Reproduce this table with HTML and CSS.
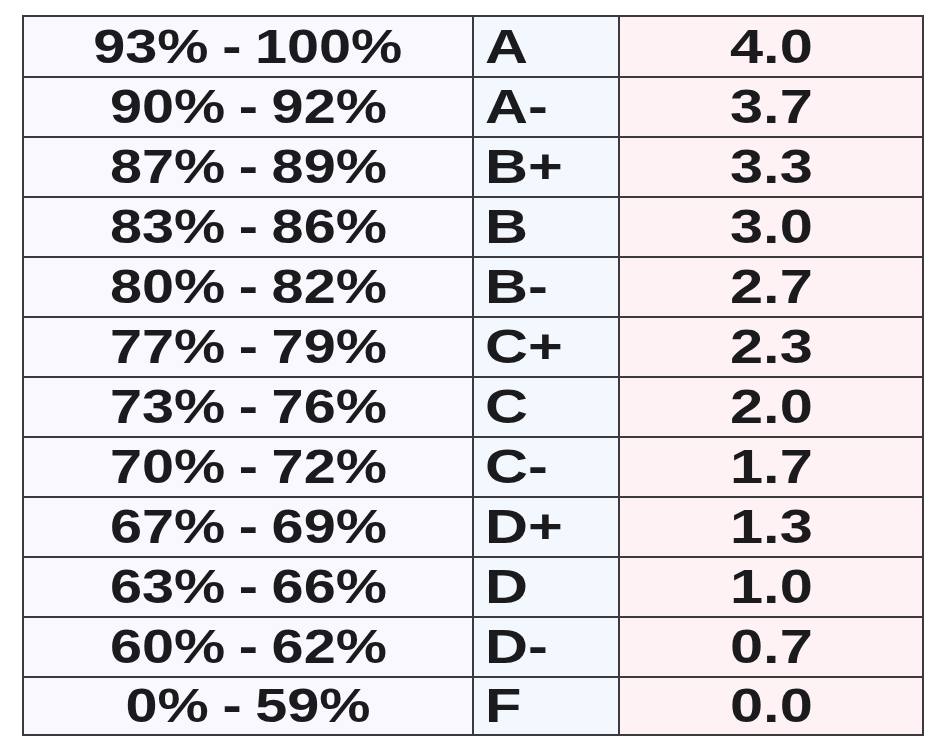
FILE: index.html
```html
<!DOCTYPE html>
<html>
<head>
<meta charset="utf-8">
<link rel="stylesheet" href="styles.css">
</head>
<body>
<div class="page">
  <div class="grade-table">
    <div class="cell range"><span class="t">93% - 100%</span></div><div class="cell letter"><span class="t">A</span></div><div class="cell gpa"><span class="t">4.0</span></div>
    <div class="cell range"><span class="t">90% - 92%</span></div><div class="cell letter"><span class="t">A-</span></div><div class="cell gpa"><span class="t">3.7</span></div>
    <div class="cell range"><span class="t">87% - 89%</span></div><div class="cell letter"><span class="t">B+</span></div><div class="cell gpa"><span class="t">3.3</span></div>
    <div class="cell range"><span class="t">83% - 86%</span></div><div class="cell letter"><span class="t">B</span></div><div class="cell gpa"><span class="t">3.0</span></div>
    <div class="cell range"><span class="t">80% - 82%</span></div><div class="cell letter"><span class="t">B-</span></div><div class="cell gpa"><span class="t">2.7</span></div>
    <div class="cell range"><span class="t">77% - 79%</span></div><div class="cell letter"><span class="t">C+</span></div><div class="cell gpa"><span class="t">2.3</span></div>
    <div class="cell range"><span class="t">73% - 76%</span></div><div class="cell letter"><span class="t">C</span></div><div class="cell gpa"><span class="t">2.0</span></div>
    <div class="cell range"><span class="t">70% - 72%</span></div><div class="cell letter"><span class="t">C-</span></div><div class="cell gpa"><span class="t">1.7</span></div>
    <div class="cell range"><span class="t">67% - 69%</span></div><div class="cell letter"><span class="t">D+</span></div><div class="cell gpa"><span class="t">1.3</span></div>
    <div class="cell range"><span class="t">63% - 66%</span></div><div class="cell letter"><span class="t">D</span></div><div class="cell gpa"><span class="t">1.0</span></div>
    <div class="cell range"><span class="t">60% - 62%</span></div><div class="cell letter"><span class="t">D-</span></div><div class="cell gpa"><span class="t">0.7</span></div>
    <div class="cell range"><span class="t">0% - 59%</span></div><div class="cell letter"><span class="t">F</span></div><div class="cell gpa"><span class="t">0.0</span></div>
  </div>
</div>
</body>
</html>
```

FILE: styles.css
```css
html, body {
  margin: 0;
  padding: 0;
  background: #ffffff;
}

.page {
  padding: 15px 0 0 22px;
}

.grade-table {
  display: grid;
  grid-template-columns: 448px 144px 302px;
  grid-template-rows: 59px repeat(10, 58px) 56px;
  gap: 2px;
  padding: 2px;
  width: max-content;
  background: #3b3b3e;
  font-family: "Liberation Sans", Arial, sans-serif;
  font-weight: bold;
  font-size: 48px;
  color: #1b1b1d;
}

.cell {
  display: flex;
  align-items: center;
  overflow: hidden;
}

.range {
  background: #f8f8fe;
  justify-content: center;
}

.letter {
  background: #f2f8fd;
  justify-content: flex-start;
  padding-left: 11px;
}

.gpa {
  background: #fef2f5;
  justify-content: center;
}

.t {
  display: inline-block;
  line-height: 1;
  transform: scaleX(1.24);
  transform-origin: center;
  white-space: nowrap;
}

.range .t {
  transform: scaleX(1.2);
  word-spacing: -2px;
}

.letter .t {
  transform-origin: left center;
}
```
